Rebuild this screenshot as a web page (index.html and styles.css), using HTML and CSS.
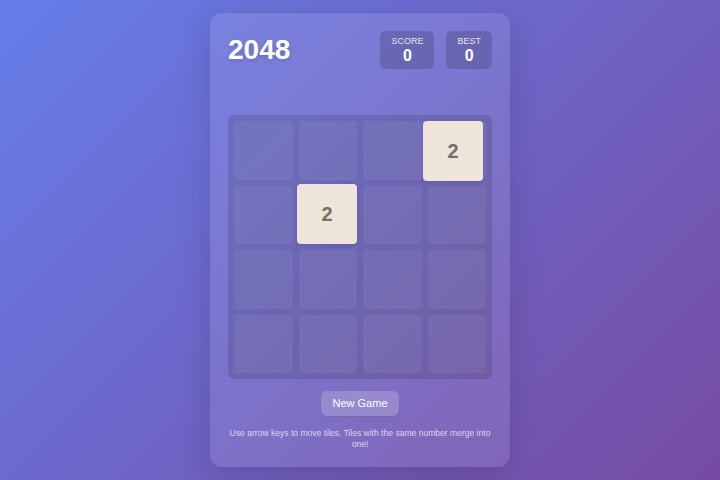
FILE: index.html
```html
<!DOCTYPE html>
<html lang="en">
<head>
<meta charset="utf-8">
<title>2048</title>
<link rel="stylesheet" href="styles.css">
</head>
<body>
<main class="card">
  <header class="header">
    <h1 class="title">2048</h1>
    <div class="scores">
      <div class="score-box">
        <div class="score-label">SCORE</div>
        <div class="score-value">0</div>
      </div>
      <div class="score-box">
        <div class="score-label">BEST</div>
        <div class="score-value">0</div>
      </div>
    </div>
  </header>
  <section class="board">
    <div class="grid">
      <div class="cell"></div><div class="cell"></div><div class="cell"></div><div class="cell"></div>
      <div class="cell"></div><div class="cell"></div><div class="cell"></div><div class="cell"></div>
      <div class="cell"></div><div class="cell"></div><div class="cell"></div><div class="cell"></div>
      <div class="cell"></div><div class="cell"></div><div class="cell"></div><div class="cell"></div>
    </div>
    <div class="tile tile-2 pos-r0-c3">2</div>
    <div class="tile tile-2 pos-r1-c1">2</div>
  </section>
  <button class="new-game">New Game</button>
  <p class="hint">Use arrow keys to move tiles. Tiles with the same number merge into one!</p>
</main>
</body>
</html>
```
FILE: styles.css
```css
* { box-sizing: border-box; }
html, body { margin: 0; padding: 0; }
body {
  min-height: 100vh;
  display: flex;
  align-items: center;
  justify-content: center;
  background: linear-gradient(135deg, #667eea 0%, #764ba2 100%);
  font-family: "Liberation Sans", Arial, sans-serif;
  color: #fff;
}
.card {
  width: 300px;
  padding: 18px;
  border-radius: 12px;
  background: rgba(255, 255, 255, 0.1);
  box-shadow: 0 8px 32px rgba(0, 0, 0, 0.15);
  display: flex;
  flex-direction: column;
  align-items: center;
}
.header {
  width: 100%;
  display: flex;
  justify-content: space-between;
  align-items: center;
  margin-bottom: 46px;
}
.title {
  margin: 0;
  font-size: 28px;
  font-weight: 700;
  line-height: 1;
  color: #fff;
  text-shadow: 0 2px 4px rgba(0, 0, 0, 0.15);
}
.scores {
  display: flex;
  gap: 12px;
}
.score-box {
  background: rgba(0, 0, 0, 0.15);
  border-radius: 6px;
  padding: 5px 11px 4px;
  text-align: center;
  height: 38px;
}
.score-label {
  font-size: 9px;
  line-height: 11px;
  color: rgba(255, 255, 255, 0.85);
}
.score-value {
  font-size: 16px;
  font-weight: 700;
  line-height: 18px;
  color: #fff;
}
.board {
  position: relative;
  width: 264px;
  height: 264px;
  padding: 6px;
  border-radius: 6px;
  background: rgba(0, 0, 0, 0.12);
}
.grid {
  display: grid;
  grid-template-columns: repeat(4, 1fr);
  grid-template-rows: repeat(4, 1fr);
  gap: 6px;
  width: 100%;
  height: 100%;
}
.cell {
  border-radius: 4px;
  background: rgba(255, 255, 255, 0.06);
}
.tile {
  position: absolute;
  width: 60px;
  height: 60px;
  border-radius: 4px;
  display: flex;
  align-items: center;
  justify-content: center;
  font-size: 20px;
  font-weight: 700;
  box-shadow: 0 1px 3px rgba(0, 0, 0, 0.1);
}
.tile-2 { background: #eee4da; color: #776e65; }
.pos-r0-c3 { top: 6px; left: 195px; }
.pos-r1-c1 { top: 69px; left: 69px; }
.new-game {
  margin-top: 12px;
  padding: 6px 11px;
  height: 25px;
  border: none;
  border-radius: 6px;
  background: rgba(255, 255, 255, 0.2);
  color: #fff;
  font-family: "Liberation Sans", Arial, sans-serif;
  font-size: 11px;
  line-height: 13px;
  box-shadow: 0 1px 3px rgba(0, 0, 0, 0.08);
}
.hint {
  margin: 12px 0 0;
  font-size: 8.55px;
  line-height: 10.3px;
  text-align: center;
  color: rgba(255, 255, 255, 0.72);
}
```
